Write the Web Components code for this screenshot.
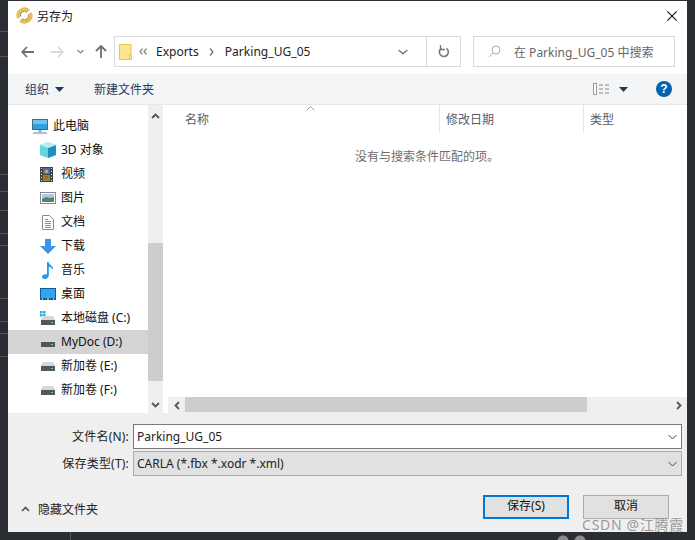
<!DOCTYPE html>
<html lang="zh">
<head>
<meta charset="UTF-8">
<title>另存为</title>
<style>
  html, body { margin: 0; height: 100%; }
  body {
    width: 695px; height: 540px; overflow: hidden;
    /* bits of the dark app window that show around the dialog */
    background:
      radial-gradient(circle at 563px 541px, #8a8a8a 5px, transparent 6px),
      radial-gradient(circle at 580px 541px, #8a8a8a 5px, transparent 6px),
      linear-gradient(#555, #555) 0 31px / 8px 1px no-repeat,
      linear-gradient(#555, #555) 0 56px / 8px 1px no-repeat,
      linear-gradient(#555, #555) 0 174px / 8px 1px no-repeat,
      linear-gradient(#555, #555) 0 191px / 8px 1px no-repeat,
      linear-gradient(#555, #555) 0 210px / 8px 1px no-repeat,
      linear-gradient(#555, #555) 0 233px / 8px 1px no-repeat,
      linear-gradient(#555, #555) 0 245px / 8px 1px no-repeat,
      linear-gradient(#555, #555) 0 298px / 8px 1px no-repeat,
      linear-gradient(#555, #555) 0 321px / 8px 1px no-repeat,
      linear-gradient(#555, #555) 0 333px / 8px 1px no-repeat,
      linear-gradient(#555, #555) 0 356px / 8px 1px no-repeat,
      linear-gradient(#555, #555) 70px 532px / 1px 8px no-repeat,
      #2a2d32;
    font: 12px "Noto Sans", "Noto Sans CJK SC", sans-serif;
    color: #1a1a1a;
    padding: 1px 8px 8px; box-sizing: border-box;
  }
</style>
</head>
<body>
<save-dialog>
  <title-bar></title-bar>
  <nav-bar></nav-bar>
  <tool-bar></tool-bar>
  <browser-pane>
    <nav-tree slot="tree">
      <tree-item icon="pc" level="0">此电脑</tree-item>
      <tree-item icon="cube">3D 对象</tree-item>
      <tree-item icon="film">视频</tree-item>
      <tree-item icon="pic">图片</tree-item>
      <tree-item icon="doc">文档</tree-item>
      <tree-item icon="down">下载</tree-item>
      <tree-item icon="music">音乐</tree-item>
      <tree-item icon="desk">桌面</tree-item>
      <tree-item icon="winhdd">本地磁盘 (C:)</tree-item>
      <tree-item icon="hdd" selected>MyDoc (D:)</tree-item>
      <tree-item icon="hdd">新加卷 (E:)</tree-item>
      <tree-item icon="hdd">新加卷 (F:)</tree-item>
    </nav-tree>
    <file-list slot="list"></file-list>
  </browser-pane>
  <save-form></save-form>
  <dialog-footer></dialog-footer>
</save-dialog>

<script>
  // little helper so each class only has to say its css + markup
  function shadow(el, html) {
    el.attachShadow({ mode: 'open' }).innerHTML = html;
  }

  const chevDown = '<svg width="9" height="6" viewBox="0 0 9 6"><path d="M.5 1l4 4 4-4" fill="none" stroke="#444" stroke-width="1"/></svg>';

  const icons = {
    pc: '<svg width="16" height="15" viewBox="0 0 16 15"><rect x=".5" y=".5" width="15" height="10" fill="#2f9fe0" stroke="#4a6a80"/><rect x="1" y="1" width="14" height="4" fill="#6cc6f2"/><path d="M6 11h4v2H6z" fill="#9fc0d4"/><path d="M1 14h14" stroke="#8fb2c8" stroke-width="1.500"/></svg>',
    cube: '<svg width="16" height="16" viewBox="0 0 16 16"><path d="M8 0l8 3v10l-8 3-8-3V3z" fill="#5fd6e0"/><path d="M8 6l8-3v10l-8 3z" fill="#1d8fc0"/><path d="M0 3l8 3 8-3-8-3z" fill="#b8f0f2"/></svg>',
    film: '<svg width="13" height="15" viewBox="0 0 13 15"><rect width="13" height="15" fill="#444"/><rect x="3" y="1" width="7" height="6" fill="#3f6fc0"/><rect x="3" y="8" width="7" height="6" fill="#7a8f3a"/><rect x="5" y="3" width="3" height="3" fill="#d9a52a"/><rect x="5" y="9" width="3" height="3" fill="#c9502a"/><path d="M1 1.500h1M1 4.500h1M1 7.500h1M1 10.500h1M1 13.500h1M11 1.500h1M11 4.500h1M11 7.500h1M11 10.500h1M11 13.500h1" stroke="#ddd"/></svg>',
    pic: '<svg width="16" height="12" viewBox="0 0 16 12"><rect x=".5" y=".5" width="15" height="11" fill="#fff" stroke="#8a8a8a"/><rect x="2" y="2" width="12" height="8" fill="#a9cce4"/><path d="M2 7l4-2 4 1 4-1v5H2z" fill="#5d7f6a"/></svg>',
    doc: '<svg style="margin-left:2px" width="12" height="15" viewBox="0 0 12 15"><path d="M.5.5h7l4 4v10H.5z" fill="#fff" stroke="#8a8a8a"/><path d="M3 4.500h3M3 6.500h6M3 8.500h6M3 10.500h6M3 12.500h6" stroke="#4aa3e0"/></svg>',
    down: '<svg width="16" height="15" viewBox="0 0 16 15"><path d="M5 0h6v7h5l-8 8-8-8h5z" fill="#3c94e2"/></svg>',
    music: '<svg style="margin-left:2px" width="12" height="17" viewBox="0 0 12 17"><path d="M5 0h1.600c.3 3 5 3.500 4.400 8-.7-2-2.800-3-4.200-3.200V13.500c0 2-2 3.500-4.300 3.500C1 17 0 16 0 14.800 0 13 2.500 11.800 5 12.400z" fill="#1e9be8"/></svg>',
    desk: '<svg width="16" height="12" viewBox="0 0 16 12"><rect width="16" height="12" fill="#16589c"/><rect x="1" y="1" width="14" height="9" fill="#2ea5ee"/><path d="M2 11h1M7 11h2M13 11h1" stroke="#fff"/></svg>',
    hdd: '<svg style="margin-left:1px" width="14" height="9" viewBox="0 0 14 9"><path d="M2 0h10l2 4H0z" fill="#d2d7da"/><rect y="4" width="14" height="5" fill="#54575a"/><rect x="10" y="6" width="2" height="1" fill="#5fe05f"/></svg>',
    winhdd: '<svg width="15" height="14" viewBox="0 0 15 14"><path d="M0 0h2.500v2.500H0zM3 0h2.500v2.500H3zM0 3h2.500v2.500H0zM3 3h2.500v2.500H3z" fill="#21b4ee"/><path d="M3 5h10l2 4H1z" fill="#d2d7da"/><rect x="1" y="9" width="14" height="5" fill="#54575a"/><rect x="11" y="11" width="2" height="1" fill="#5fe05f"/></svg>'
  };

  class SaveDialog extends HTMLElement {
    constructor() {
      super();
      shadow(this, `<style>
        :host { display: flex; flex-direction: column; width: 679px; height: 531px; background: #fff; }
      </style><slot></slot>`);
    }
  }

  class TitleBar extends HTMLElement {
    constructor() {
      super();
      shadow(this, `<style>
        :host { display: flex; align-items: center; height: 29px; padding: 0 10px 0 8px; gap: 4px; background: #fff; box-sizing: border-box; }
        span { flex: 1; }
        svg { display: block; }
      </style>
      <svg width="17" height="17" viewBox="0 0 17 17">
        <path d="M12.800 3.800A6.400 6.400 0 0 0 2.600 11" fill="none" stroke="#e2bf4e" stroke-width="3.200"/>
        <path d="M4.200 13.200A6.400 6.400 0 0 0 14.400 6" fill="none" stroke="#e2bf4e" stroke-width="3.200"/>
        <path d="M11 5.200A4 4 0 0 0 4.600 9.500M6 11.800A4 4 0 0 0 12.400 7.500" fill="none" stroke="#8c8150" stroke-width="1"/>
      </svg>
      <span>另存为</span>
      <svg width="10" height="10" viewBox="0 0 10 10"><path d="M.3.3l9.400 9.400M9.700.3L.3 9.700" stroke="#111" stroke-width="1.100"/></svg>`);
    }
  }

  class NavBar extends HTMLElement {
    constructor() {
      super();
      shadow(this, `<style>
        :host { display: flex; align-items: center; height: 44px; padding: 6px 0 7px 13px; background: #fff; box-sizing: border-box; }
        svg { display: block; flex: none; }
        .btns { display: flex; align-items: center; width: 93px; }
        .path { display: flex; align-items: center; width: 347px; height: 31px; box-sizing: border-box; border: 1px solid #d9d9d9; }
        .path .crumbs { flex: 1; display: flex; align-items: center; padding-left: 4px; }
        .path span { color: #222; }
        .drop { width: 28px; display: flex; justify-content: flex-start; padding-left: 0; }
        .refresh { width: 33px; height: 100%; border-left: 1px solid #d9d9d9; display: flex; align-items: center; justify-content: center; }
        .search { display: flex; align-items: center; width: 202px; height: 31px; box-sizing: border-box; border: 1px solid #d9d9d9; margin-left: 12px; padding-left: 14px; color: #666; }
        .search span { margin-left: 13px; }
      </style>
      <div class="btns">
        <svg width="13" height="12" viewBox="0 0 13 12"><path d="M6 1L1.200 6 6 11M1.500 6H13" fill="none" stroke="#6f6f6f" stroke-width="1.800"/></svg>
        <svg style="margin-left:17px" width="13" height="12" viewBox="0 0 13 12"><path d="M7 1l4.800 5L7 11M11.500 6H0" fill="none" stroke="#d9d9d9" stroke-width="1.800"/></svg>
        <svg style="margin-left:13px" width="7" height="5" viewBox="0 0 7 5"><path d="M.5 1l3 3 3-3" fill="none" stroke="#888" stroke-width="1.200"/></svg>
        <svg style="margin-left:11px" width="12" height="13" viewBox="0 0 12 13"><path d="M1 6l5-5 5 5M6 1.500V13" fill="none" stroke="#6f6f6f" stroke-width="1.800"/></svg>
      </div>
      <div class="path">
        <div class="crumbs">
          <svg width="13" height="16" viewBox="0 0 13 16"><path d="M.5.5h11.500v15H.5z" fill="#fde48f" stroke="#e8c75c"/><path d="M10.500 10.500h2v5h-2z" fill="#fbe9a8" stroke="#e8c75c"/></svg>
          <svg style="margin-left:7px" width="8" height="7" viewBox="0 0 8 7"><path d="M3.500.5L1 3.500l2.500 3M7.500.5L5 3.500l2.500 3" fill="none" stroke="#888" stroke-width="1.200"/></svg>
          <span style="margin-left:9px">Exports</span>
          <svg style="margin:0 11px 0 10px" width="5" height="8" viewBox="0 0 5 8"><path d="M1 .5l3 3.500-3 3.500" fill="none" stroke="#777" stroke-width="1.300"/></svg>
          <span style="letter-spacing:.05px">Parking_UG_05</span>
        </div>
        <div class="drop"><svg width="10" height="6" viewBox="0 0 10 6"><path d="M.7 1l4.300 3.800L9.300 1" fill="none" stroke="#777" stroke-width="1.500"/></svg></div>
        <div class="refresh"><svg width="12" height="13" viewBox="0 0 12 13"><path d="M8.500 3.400A4.500 4.500 0 1 1 3.500 3.200" fill="none" stroke="#777" stroke-width="1.600"/><path d="M2.500 0v4.500H7" fill="none" stroke="#777" stroke-width="1.300"/></svg></div>
      </div>
      <div class="search">
        <svg width="13" height="13" viewBox="0 0 13 13"><circle cx="8" cy="5" r="4" fill="none" stroke="#aaa"/><path d="M5 8l-4 4" stroke="#c8a8a8"/></svg>
        <span>在 Parking_UG_05 中搜索</span>
      </div>`);
    }
  }

  class ToolBar extends HTMLElement {
    constructor() {
      super();
      shadow(this, `<style>
        :host { display: flex; align-items: center; height: 31px; padding: 0 15px 0 17px; background: #f3f5f7; color: #1f3a5f; border-bottom: 1px solid #e8e8e8; box-sizing: border-box; }
        svg { display: block; flex: none; }
        .new { margin-left: 30px; flex: 1; }
        .help { width: 16px; height: 16px; border-radius: 50%; background: #0063b1; color: #fff; font: bold 12px/16px "Liberation Sans", sans-serif; text-align: center; margin-left: 28px; }
      </style>
      <span>组织</span><svg style="margin-left:6px" width="9" height="5" viewBox="0 0 9 5"><path d="M0 0h9L4.500 5z" fill="#1f3a5f"/></svg>
      <span class="new">新建文件夹</span>
      <svg width="17" height="12" viewBox="0 0 17 12"><rect x=".5" y=".5" width="3" height="11" fill="#fff" stroke="#999"/><path d="M6 2h4M12 2h4M6 6h4M12 6h4M6 10h4M12 10h4" stroke="#888"/></svg>
      <svg style="margin-left:9px" width="9" height="5" viewBox="0 0 9 5"><path d="M0 0h9L4.500 5z" fill="#1f3a5f"/></svg>
      <div class="help">?</div>`);
    }
  }

  class BrowserPane extends HTMLElement {
    constructor() {
      super();
      shadow(this, `<style>
        :host { display: flex; height: 308px; background: #fff; }
        .tree { width: 140px; flex: none; overflow: hidden; }
        .vbar { width: 15px; flex: none; margin-right: 1px; background: #efefef; display: flex; flex-direction: column; align-items: center; }
        .btn { height: 17px; display: flex; align-items: center; justify-content: center; }
        .up { margin-top: 2px; }
        .thumb { align-self: stretch; margin-top: 119px; height: 138px; background: #cdcdcd; }
        .down { margin-top: auto; }
        .list { flex: 1; min-width: 0; }
        svg { display: block; }
      </style>
      <div class="tree"><slot name="tree"></slot></div>
      <div class="vbar">
        <div class="btn up"><svg width="9" height="6" viewBox="0 0 9 6"><path d="M1 5l3.500-3.500L8 5" fill="none" stroke="#555" stroke-width="1.800"/></svg></div>
        <div class="thumb"></div>
        <div class="btn down"><svg width="9" height="6" viewBox="0 0 9 6"><path d="M1 1l3.500 3.500L8 1" fill="none" stroke="#555" stroke-width="1.800"/></svg></div>
      </div>
      <div class="list"><slot name="list"></slot></div>`);
    }
  }

  class NavTree extends HTMLElement {
    constructor() {
      super();
      shadow(this, `<style>:host { display: block; padding-top: 9px; }</style><slot></slot>`);
    }
  }

  class TreeItem extends HTMLElement {
    constructor() {
      super();
      const root = this.getAttribute('level') === '0';
      shadow(this, `<style>
        :host { display: flex; align-items: center; height: 24px; padding-left: ${root ? 24 : 32}px; color: #111; white-space: nowrap; }
        :host([selected]) { background: #d4d4d4; }
        .ic { width: 21px; display: flex; justify-content: flex-start; flex: none; }
        span { padding-bottom: 2px; }
      </style>
      <div class="ic">${icons[this.getAttribute('icon')] || ''}</div><span><slot></slot></span>`);
    }
  }

  class FileList extends HTMLElement {
    constructor() {
      super();
      shadow(this, `<style>
        :host { display: flex; flex-direction: column; height: 100%; color: #555e6b; }
        .head { display: flex; height: 28px; align-items: center; position: relative; }
        .col { box-sizing: border-box; height: 100%; display: flex; align-items: center; padding-left: 6px; border-right: 1px solid #e5e5e5; }
        .sort { position: absolute; left: 142px; top: 1px; }
        .body { flex: 1; text-align: center; padding-top: 14px; color: #6d6d6d; padding-left: 3px; }
        .hbar { height: 16px; display: flex; align-items: center; background: #efefef; margin-left: 4px; }
        .hbar .btn { width: 17px; display: flex; justify-content: center; flex: none; }
        .track { flex: 1; height: 100%; }
        .thumb { width: 402px; height: 15px; background: #cdcdcd; }
        svg { display: block; }
      </style>
      <div class="head">
        <div class="col" style="width:276px;padding-left:21px">名称</div>
        <div class="col" style="width:144px">修改日期</div>
        <div class="col" style="border:0">类型</div>
        <svg class="sort" width="9" height="5" viewBox="0 0 9 5"><path d="M.5 4.500l4-4 4 4" fill="none" stroke="#999"/></svg>
      </div>
      <div class="body">没有与搜索条件匹配的项。</div>
      <div class="hbar">
        <div class="btn"><svg width="6" height="9" viewBox="0 0 6 9"><path d="M5 1L1.500 4.500 5 8" fill="none" stroke="#555" stroke-width="1.800"/></svg></div>
        <div class="track"><div class="thumb"></div></div>
        <div class="btn" style="width:16px"><svg width="6" height="9" viewBox="0 0 6 9"><path d="M1 1l3.500 3.500L1 8" fill="none" stroke="#555" stroke-width="1.800"/></svg></div>
      </div>`);
    }
  }

  class SaveForm extends HTMLElement {
    constructor() {
      super();
      shadow(this, `<style>
        :host { display: grid; grid-template-columns: 125px 1fr; row-gap: 2px; padding: 11px 5px 0 0; background: #efefef; }
        label { text-align: right; line-height: 25px; padding-right: 4px; color: #222; letter-spacing: .2px; }
        .field { height: 25px; box-sizing: border-box; display: flex; align-items: center; justify-content: space-between; padding: 0 4px 0 3px; color: #222; }
        .name { background: #fff; border: 1px solid #7a7a7a; }
        .type { background: #e1e1e1; border: 1px solid #adadad; }
      </style>
      <label>文件名(N):</label>
      <div class="field name"><span>Parking_UG_05</span>${chevDown}</div>
      <label>保存类型(T):</label>
      <div class="field type"><span>CARLA (*.fbx *.xodr *.xml)</span>${chevDown}</div>`);
    }
  }

  class DialogFooter extends HTMLElement {
    constructor() {
      super();
      shadow(this, `<style>
        :host { display: flex; align-items: flex-start; flex: 1; padding: 19px 18px 0 13px; background: #efefef; position: relative; }
        .hide { display: flex; align-items: center; gap: 8px; flex: 1; color: #222; height: 24px; margin-top: 2px; }
        button { font: inherit; line-height: 14px; color: #111; width: 86px; height: 24px; padding: 0 0 2px; background: #e1e1e1; box-sizing: border-box; }
        .ok { border: 2px solid #0078d7; margin-right: 14px; }
        .no { border: 1px solid #adadad; }
        .mark { position: absolute; right: 3px; bottom: 0; font-size: 14px; line-height: 14px; color: rgba(130,130,130,.8); letter-spacing: .7px; white-space: nowrap; }
      </style>
      <div class="hide"><svg width="9" height="6" viewBox="0 0 9 6"><path d="M1 5l3.500-3.500L8 5" fill="none" stroke="#555" stroke-width="1.600"/></svg><span>隐藏文件夹</span></div>
      <button class="ok">保存(S)</button><button class="no">取消</button>
      <span class="mark">CSDN @江腾霞</span>`);
    }
  }

  customElements.define('save-dialog', SaveDialog);
  customElements.define('title-bar', TitleBar);
  customElements.define('nav-bar', NavBar);
  customElements.define('tool-bar', ToolBar);
  customElements.define('browser-pane', BrowserPane);
  customElements.define('nav-tree', NavTree);
  customElements.define('tree-item', TreeItem);
  customElements.define('file-list', FileList);
  customElements.define('save-form', SaveForm);
  customElements.define('dialog-footer', DialogFooter);
</script>
</body>
</html>
